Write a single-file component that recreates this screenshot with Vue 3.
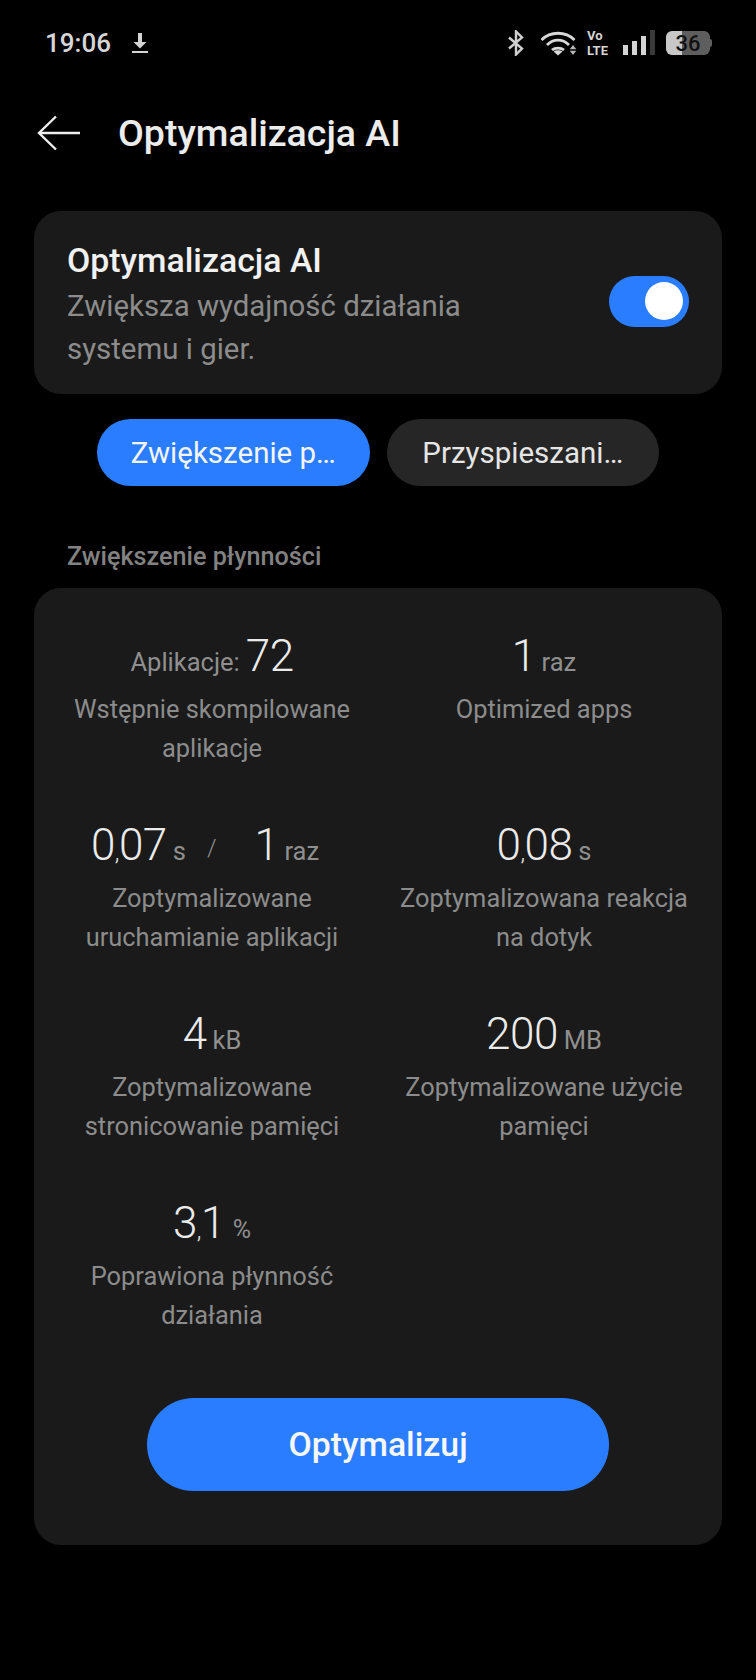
<script setup>
const rows = [
  { id: 'a', parts: [{ u: 'Aplikacje:', lead: true }, { n: '72' }], label: 'Wstępnie skompilowane aplikacje' },
  { id: 'b', parts: [{ n: '1' }, { u: 'raz' }], label: 'Optimized apps' },
  { id: 'c', shift: true, parts: [{ n: '0', c: '07' }, { u: 's' }, { sep: true }, { n: '1' }, { u: 'raz' }], label: 'Zoptymalizowane uruchamianie aplikacji' },
  { id: 'd', parts: [{ n: '0', c: '08' }, { u: 's' }], label: 'Zoptymalizowana reakcja na dotyk' },
  { id: 'e', parts: [{ n: '4' }, { u: 'kB' }], label: 'Zoptymalizowane stronicowanie pamięci' },
  { id: 'f', parts: [{ n: '200' }, { u: 'MB' }], label: 'Zoptymalizowane użycie pamięci' },
  { id: 'g', parts: [{ n: '3', c: '1' }, { u: '%', small: true }], label: 'Poprawiona płynność działania' },
]
</script>

<template>
  <div class="page">
    <header class="status">
      <div class="status-left">
        <span class="time">19:06</span>
        <svg class="dl" width="18" height="22" viewBox="0 0 18 22">
          <path d="M7 1h4v9h4.500L9 16.500 2.500 10H7z" fill="#d4d4d4" />
          <rect x="1" y="19" width="16" height="2" fill="#d4d4d4" />
        </svg>
      </div>
      <div class="status-right">
        <svg width="16" height="26" viewBox="0 0 16 26" fill="none" stroke="#d0d0d0" stroke-width="2.400">
          <path d="M1 7.500 14 18.500 8 24.500V1.500l6 6L1 18.500" />
        </svg>
        <svg class="wifi" width="37" height="26" viewBox="0 0 37 26" fill="none" stroke="#d8d8d8" stroke-width="2.800">
          <path d="M1.500 10C10.500 1 25.500 1 34.500 10" />
          <path d="M7 15C13.500 8.500 22.500 8.500 29 15" />
          <path d="M12 20C15 17.500 21 17.500 24 20" />
          <path d="M18 25.500 13.500 21.500C16 19.800 20 19.800 22.500 21.500Z" fill="#d8d8d8" stroke="none" />
          <path d="M33 15 36.300 19.200H29.700ZM33 25 29.700 20.800H36.300Z" fill="#b5b5b5" stroke="none" />
        </svg>
        <div class="volte"><span>Vo</span><span>LTE</span></div>
        <svg class="signal" width="33" height="26" viewBox="0 0 33 26">
          <rect x="0" y="15" width="5" height="10" fill="#d4d4d4" />
          <rect x="9" y="11" width="5" height="14" fill="#d4d4d4" />
          <rect x="18" y="6" width="5" height="19" fill="#d4d4d4" />
          <rect x="27" y="0" width="5" height="25" fill="#3a3a3a" />
        </svg>
        <div class="battery">
          <div class="batt-body"><span>36</span></div>
          <i class="batt-tip"></i>
        </div>
      </div>
    </header>

    <div class="appbar">
      <svg width="44" height="36" viewBox="0 0 44 36" fill="none" stroke="#eeeeee" stroke-width="2.400">
        <path d="M43 18H2" />
        <path d="M19 1.500 2 18l17 16.500" />
      </svg>
      <h1>Optymalizacja AI</h1>
    </div>

    <section class="card intro">
      <div class="intro-text">
        <div class="intro-title">Optymalizacja AI</div>
        <p>Zwiększa wydajność działania systemu i gier.</p>
      </div>
      <div class="switch"><i></i></div>
    </section>

    <nav class="tabs">
      <div class="tab active">Zwiększenie p…</div>
      <div class="tab">Przyspieszani…</div>
    </nav>

    <div class="section-label">Zwiększenie płynności</div>

    <section class="card stats">
      <div class="grid">
        <div v-for="r in rows" :key="r.id" class="cell">
          <div class="value" :class="{ shift: r.shift }">
            <template v-for="(p, i) in r.parts" :key="i">
              <span v-if="p.n" class="num">{{ p.n }}<template v-if="p.c"><span class="comma">,</span>{{ p.c }}</template></span>
              <span v-else-if="p.sep" class="sep">/</span>
              <span v-else class="unit" :class="{ lead: p.lead, small: p.small }">{{ p.u }}</span>
            </template>
          </div>
          <div class="label">{{ r.label }}</div>
        </div>
      </div>
      <button class="primary">Optymalizuj</button>
    </section>
  </div>
</template>

<style scoped>
.page {
  width: 756px;
  height: 1680px;
  background: #000;
  font-family: Roboto, "Noto Sans", sans-serif;
  color: #fff;
  overflow: hidden;
  box-sizing: border-box;
}
.status {
  height: 86px;
  box-sizing: border-box;
  padding: 29px 44px 0 45px;
  display: flex;
  justify-content: space-between;
  align-items: flex-start;
}
.status-left {
  display: flex;
  align-items: center;
  gap: 20px;
  height: 28px;
}
.time {
  font-size: 26px;
  font-weight: 500;
  color: #d6d6d6;
}
.status-right {
  display: flex;
  align-items: center;
  gap: 0;
  height: 28px;
}
.wifi { margin-left: 16px; }
.volte {
  margin-left: 10px;
  display: flex;
  flex-direction: column;
  font-size: 13px;
  font-weight: 700;
  line-height: 15.4px;
  color: #d4d4d4;
  width: 24px;
}
.signal { margin-left: 12px; }
.battery {
  margin-left: 10px;
  display: flex;
  align-items: center;
}
.batt-body {
  width: 44px;
  height: 24px;
  border-radius: 6px;
  background: linear-gradient(90deg, #c8c8c8 0 36%, #5e5e5e 36% 100%);
  display: flex;
  align-items: center;
  justify-content: center;
}
.batt-body span {
  font-size: 22px;
  font-weight: 500;
  color: #111;
}
.batt-tip {
  width: 2px;
  height: 8px;
  background: #5e5e5e;
  border-radius: 0 2px 2px 0;
}
.appbar {
  height: 94px;
  padding-left: 37px;
  display: flex;
  align-items: center;
  gap: 37px;
}
h1 {
  margin: 0;
  font-size: 37.5px;
  font-weight: 500;
  color: #ececec;
}
.card {
  background: #1a1a1a;
  border-radius: 27px;
  margin: 0 34px;
}
.intro {
  margin-top: 31px;
  height: 183px;
  box-sizing: border-box;
  padding: 32px 33px 0;
  display: flex;
  justify-content: space-between;
}
.intro-text { width: 420px; }
.intro-title {
  font-size: 33.8px;
  font-weight: 500;
  line-height: 36px;
  color: #f1f1f1;
}
.intro-text p {
  margin: 6px 0 0;
  font-size: 29.4px;
  line-height: 43px;
  color: #8c8c8c;
}
.switch {
  margin-top: 33px;
  width: 80px;
  height: 51px;
  border-radius: 26px;
  background: #2a7dff;
  position: relative;
}
.switch i {
  position: absolute;
  right: 6px;
  top: 6px;
  width: 38px;
  height: 38px;
  border-radius: 50%;
  background: #fff;
}
.tabs {
  margin: 25px 97px 0;
  display: flex;
  gap: 17px;
}
.tab {
  width: 273px;
  height: 67px;
  border-radius: 34px;
  background: #262626;
  display: flex;
  align-items: center;
  justify-content: center;
  font-size: 29.5px;
  white-space: nowrap;
  color: #e6e6e6;
}
.tab.active {
  background: #2a7dff;
  color: #f5f5f5;
}
.section-label {
  margin: 56px 0 0 67px;
  font-size: 25.2px;
  line-height: 30px;
  font-weight: 500;
  color: #828282;
}
.stats {
  margin-top: 16px;
  height: 957px;
  box-sizing: border-box;
  padding: 36px 12px 0;
}
.grid {
  display: grid;
  grid-template-columns: 1fr 1fr;
  grid-auto-rows: 189px;
}
.cell {
  padding: 0 16px;
  text-align: center;
}
.value {
  height: 66px;
  display: flex;
  justify-content: center;
  align-items: baseline;
  gap: 6px;
  line-height: 64px;
}
.value.shift { padding-right: 14px; }
.num {
  font-size: 44px;
  font-weight: 300;
  letter-spacing: -0.5px;
  color: #ebebeb;
}
.comma { font-size: 24px; }
.unit {
  font-size: 25.5px;
  color: #8f8f8f;
}
.unit.small { font-size: 25px; margin-left: 2px; }
.sep {
  font-size: 24px;
  font-weight: 300;
  color: #8f8f8f;
  margin: 0 32px 0 15px;
  position: relative;
  top: -4px;
}
.label {
  font-size: 25.4px;
  line-height: 39px;
  color: #8c8c8c;
}
.primary {
  display: block;
  margin: 18px auto 0;
  width: 462px;
  height: 93px;
  border: 0;
  border-radius: 47px;
  background: #2a7dff;
  color: #f7f7f7;
  font-family: inherit;
  font-size: 33.8px;
  font-weight: 500;
}
</style>
